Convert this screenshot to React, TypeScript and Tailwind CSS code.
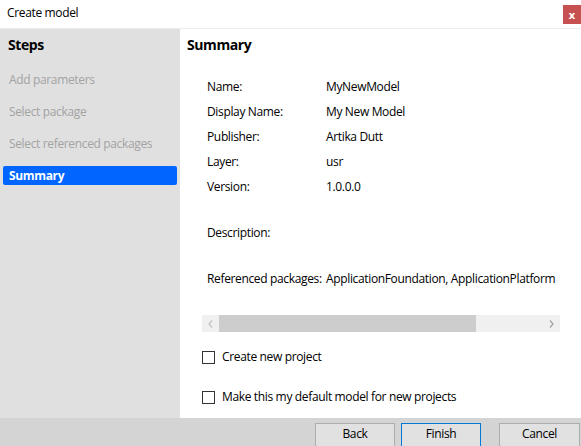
import React from 'react';

const font = { fontFamily: '"Open Sans", "Noto Sans", sans-serif' };

const details: [string, string][] = [
  ['Name:', 'MyNewModel'],
  ['Display Name:', 'My New Model'],
  ['Publisher:', 'Artika Dutt'],
  ['Layer:', 'usr'],
  ['Version:', '1.0.0.0'],
];

const steps = ['Add parameters', 'Select package', 'Select referenced packages'];

const Checkbox: React.FC<{ label: string }> = ({ label }) => (
  <label className="flex items-center h-[20px] gap-[7px]">
    <span className="w-[13px] h-[13px] border border-[#333333] bg-white shrink-0" />
    <span className="text-[12px] text-black">{label}</span>
  </label>
);

const App: React.FC = () => {
  return (
    <div
      className="w-[581px] h-[446px] flex flex-col bg-white overflow-hidden text-[12px] tracking-[-0.35px] text-black antialiased"
      style={font}
    >
      {/* title bar */}
      <div className="h-[29px] shrink-0 flex items-start justify-between border-b border-[#ececec]">
        <span className="pl-[7px] pt-[4px] leading-[18px] text-[12px]">Create model</span>
        <button className="mt-[5px] w-[18px] h-[19px] bg-[#c75050] text-white text-[11px] font-bold leading-[17px] tracking-normal flex items-center justify-center">
          x
        </button>
      </div>

      <div className="flex-1 flex min-h-0">
        {/* steps */}
        <div className="w-[180px] shrink-0 bg-[#e0e0e0] flex flex-col">
          <div className="h-[30px] flex items-center pl-[8px] text-[14px] font-bold tracking-[-0.4px]">Steps</div>
          <div className="mt-[5px] flex flex-col">
            {steps.map((s) => (
              <div key={s} className="h-[32px] flex items-center pl-[9px] text-[#a3a3a3]">
                {s}
              </div>
            ))}
            <div className="mx-[3px] mt-[6px] h-[19px] rounded-[2px] bg-[#0066ff] text-white font-bold flex items-center pl-[6px]">
              Summary
            </div>
          </div>
        </div>

        {/* summary */}
        <div className="flex-1 flex flex-col">
          <div className="h-[30px] flex items-center pl-[7px] text-[14px] font-bold tracking-[-0.4px]">Summary</div>
          <div className="pl-[22px] pr-[21px] flex flex-col">
            <div className="mt-[15px] pl-[5px] flex flex-col">
              {details.map(([k, v]) => (
                <div key={k} className="h-[25px] flex items-center">
                  <span className="w-[119px] shrink-0">{k}</span>
                  <span>{v}</span>
                </div>
              ))}
              <div className="mt-[21px] h-[25px] flex items-center">Description:</div>
              <div className="mt-[21px] h-[25px] flex items-center whitespace-nowrap overflow-hidden">
                <span className="w-[119px] shrink-0">Referenced packages:</span>
                <span>ApplicationFoundation, ApplicationPlatform</span>
              </div>
            </div>

            {/* horizontal scrollbar */}
            <div className="mt-[24px] h-[17px] bg-[#f0f0f0] flex items-stretch">
              <div className="w-[17px] flex items-center justify-center">
                <svg width="5" height="8" viewBox="0 0 5 8">
                  <polyline points="4,0.5 1,4 4,7.5" fill="none" stroke="#c2c2c2" strokeWidth="1.2" />
                </svg>
              </div>
              <div className="w-[257px] bg-[#cdcdcd]" />
              <div className="flex-1" />
              <div className="w-[17px] flex items-center justify-center">
                <svg width="5" height="8" viewBox="0 0 5 8">
                  <polyline points="1,0.5 4,4 1,7.5" fill="none" stroke="#a0a0a0" strokeWidth="1.2" />
                </svg>
              </div>
            </div>

            <div className="mt-[15px] flex flex-col gap-[20px]">
              <Checkbox label="Create new project" />
              <Checkbox label="Make this my default model for new projects" />
            </div>
          </div>
        </div>
      </div>

      {/* footer */}
      <div className="h-[28px] shrink-0 bg-[#d4d4d4] flex items-start justify-end pt-[5px] pr-[1px] overflow-hidden">
        <button className="w-[80px] h-[25px] shrink-0 bg-[#e1e1e1] border border-[#adadad] pt-[2px] leading-[16px] flex justify-center">
          Back
        </button>
        <button className="ml-[6px] w-[80px] h-[25px] shrink-0 bg-[#e1e1e1] border border-[#0078d7] pt-[2px] leading-[16px] flex justify-center">
          Finish
        </button>
        <button className="ml-[18px] w-[81px] h-[25px] shrink-0 bg-[#e1e1e1] border border-[#adadad] pt-[2px] leading-[16px] flex justify-center">
          Cancel
        </button>
      </div>
    </div>
  );
};

export default App;
